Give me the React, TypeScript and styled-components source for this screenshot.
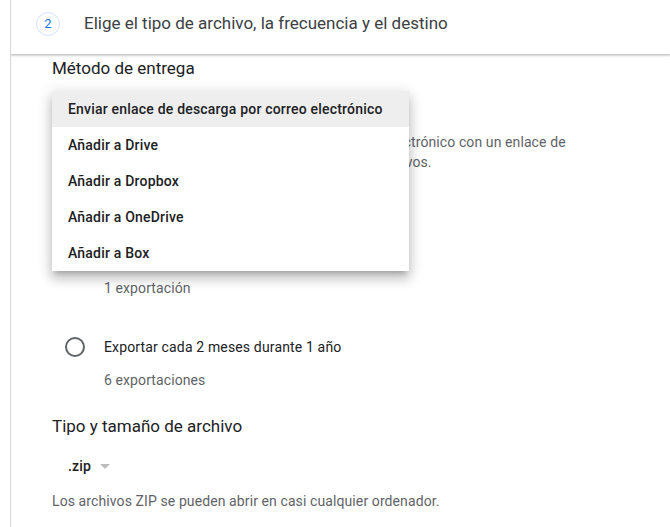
import React from "react";
import styled, { createGlobalStyle } from "styled-components";

const Global = createGlobalStyle`
  html, body { margin: 0; padding: 0; background: #fff; }
  body { font-family: Roboto, "Noto Sans", Arial, sans-serif; -webkit-font-smoothing: antialiased; }
  * { box-sizing: border-box; }
`;

const Card = styled.div`
  margin-left: 10px;
  min-height: 527px;
  border-left: 1px solid #d6d6d6;
  background: #fff;
  overflow: hidden;
`;

const Header = styled.div`
  position: relative;
  z-index: 2;
  height: 54px;
  display: flex;
  align-items: center;
  align-self: stretch;
  padding: 0 0 8px 25px;
  background: #fff;
  box-shadow: 0 1px 2px rgba(60, 64, 67, 0.3), 0 1px 3px 1px rgba(60, 64, 67, 0.12);
`;

const StepBadge = styled.div`
  width: 24px;
  height: 24px;
  margin-top: 1px;
  border-radius: 50%;
  border: 1px solid #d2e3fc;
  color: #1a73e8;
  font-size: 13px;
  display: flex;
  align-items: center;
  justify-content: center;
`;

const Title = styled.div`
  margin-left: 24px;
  font-size: 17px;
  color: #3c4043;
  line-height: 24px;
`;

const Content = styled.div`
  position: relative;
  padding: 2px 0 0 41px;
  display: flex;
  flex-direction: column;
`;

const Heading = styled.div<{ $mt?: number }>`
  margin-top: ${(p) => p.$mt ?? 0}px;
  font-size: 17px;
  line-height: 24px;
  height: 24px;
  color: #202124;
`;

const SelectField = styled.div<{ $mt?: number }>`
  margin-top: ${(p) => p.$mt ?? 0}px;
  height: 36px;
  display: flex;
  align-items: center;
  padding-left: 16px;
  font-size: 14px;
  font-weight: 500;
  color: #202124;
`;

const ZipSelect = styled.div`
  margin-top: 18px;
  height: 20px;
  display: flex;
  align-items: center;
  padding-left: 16px;
  font-size: 14px;
  font-weight: 500;
  letter-spacing: 0.2px;
  color: #202124;
`;

const Caret = styled.span`
  margin-left: 9px;
  margin-top: 1px;
  width: 0;
  height: 0;
  border-left: 5px solid transparent;
  border-right: 5px solid transparent;
  border-top: 5px solid #bdbdbd;
`;

const Help = styled.div<{ $mt?: number; $indent?: number }>`
  margin-top: ${(p) => p.$mt ?? 0}px;
  padding-left: ${(p) => p.$indent ?? 0}px;
  font-size: 14px;
  line-height: 20px;
  letter-spacing: 0.1px;
  color: #5f6368;
`;

const RadioRow = styled.div<{ $mt?: number }>`
  margin-top: ${(p) => p.$mt ?? 0}px;
  height: 20px;
  display: flex;
  align-items: center;
  padding-left: 13px;
  font-size: 14px;
  letter-spacing: 0.15px;
  color: #202124;
`;

const Radio = styled.span`
  width: 20px;
  height: 20px;
  border-radius: 50%;
  border: 2px solid #5f6368;
  margin-right: 19px;
`;

const Menu = styled.div`
  position: absolute;
  z-index: 3;
  top: 37px;
  left: 41px;
  width: 357px;
  background: #fff;
  box-shadow: 0 5px 5px -3px rgba(0, 0, 0, 0.2), 0 8px 10px 1px rgba(0, 0, 0, 0.14),
    0 3px 14px 2px rgba(0, 0, 0, 0.12);
  display: flex;
  flex-direction: column;
`;

const MenuItem = styled.div<{ $active?: boolean }>`
  height: 36px;
  display: flex;
  align-items: center;
  padding-left: 16px;
  font-size: 14px;
  font-weight: 500;
  letter-spacing: 0.2px;
  color: #202124;
  background: ${(p) => (p.$active ? "#eeeeee" : "#fff")};
`;

const items = [
  "Enviar enlace de descarga por correo electrónico",
  "Añadir a Drive",
  "Añadir a Dropbox",
  "Añadir a OneDrive",
  "Añadir a Box",
];

export default function App() {
  return (
    <>
      <Global />
      <Card>
        <Header>
          <StepBadge>2</StepBadge>
          <Title>Elige el tipo de archivo, la frecuencia y el destino</Title>
        </Header>
        <Content>
          <Heading>Método de entrega</Heading>
          <SelectField $mt={11}>Enviar enlace de descarga por correo electrónico</SelectField>
          <Help $mt={5}>
            Cuando tus archivos estén listos, recibirás un correo electrónico con un enlace de
            <br />
            descarga. Tendrás una semana para descargar tus archivos.
          </Help>
          <Heading $mt={34}>Frecuencia</Heading>
          <RadioRow $mt={15}>
            <Radio />
            Exportar una vez
          </RadioRow>
          <Help $mt={13} $indent={52}>1 exportación</Help>
          <RadioRow $mt={39}>
            <Radio />
            Exportar cada 2 meses durante 1 año
          </RadioRow>
          <Help $mt={13} $indent={52}>6 exportaciones</Help>
          <Heading $mt={24}>Tipo y tamaño de archivo</Heading>
          <ZipSelect>
            .zip
            <Caret />
          </ZipSelect>
          <Help $mt={15}>Los archivos ZIP se pueden abrir en casi cualquier ordenador.</Help>
          <Menu>
            {items.map((t, i) => (
              <MenuItem key={t} $active={i === 0}>
                {t}
              </MenuItem>
            ))}
          </Menu>
        </Content>
      </Card>
    </>
  );
}
